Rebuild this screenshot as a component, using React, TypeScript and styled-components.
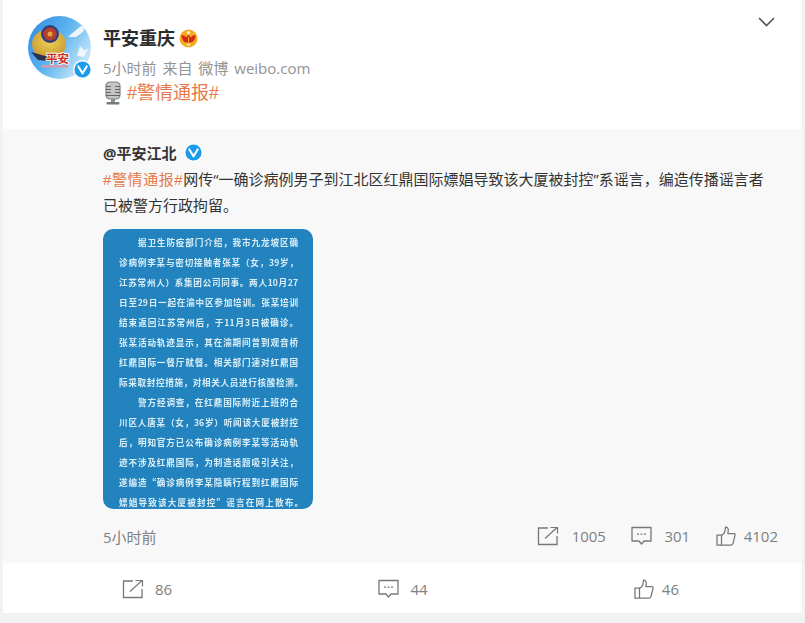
import React from "react";
import styled, { createGlobalStyle } from "styled-components";

const Global = createGlobalStyle`
  html, body { margin: 0; padding: 0; background: #f2f2f2; }
  body { font-family: "Open Sans", "Noto Sans CJK SC", sans-serif; }
  * { box-sizing: border-box; }
`;
const Page = styled.div`
  width: 805px; height: 623px; padding: 0 3px 10px; overflow: hidden;
`;
const Card = styled.main`
  width: 799px; height: 613px; background: #fff; display: flex; flex-direction: column;
`;
const Header = styled.header`
  height: 129px; padding: 16px 28px 0 25px; display: flex; align-items: flex-start;
`;
const AvatarWrap = styled.div`
  position: relative; width: 63px; height: 63px; flex: none; margin-right: 12px;
`;
const Badge = styled.div`
  position: absolute; left: 45px; top: 44px; width: 19px; height: 19px;
`;
const Author = styled.div`
  flex: 1; display: flex; flex-direction: column;
`;
const NameRow = styled.div`
  height: 26px; margin-top: 9px; display: flex; align-items: center; gap: 4px;
`;
const Name = styled.span`
  font-size: 18px; font-weight: 700; color: #2c2c2c; line-height: 26px;
`;
const Meta = styled.div`
  margin-top: 6px; height: 22px; font-size: 15px; line-height: 22px; color: #939393; word-spacing: 2px;
`;
const TopicRow = styled.div`
  margin-top: 0; height: 28px; display: flex; align-items: center; gap: 4px;
`;
const Topic = styled.span<{ $size: number; $track?: number }>`
  color: #e6794a; font-size: ${(p) => p.$size}px; line-height: 1;
  letter-spacing: ${(p) => p.$track ?? 0}px;
  font-family: "Liberation Sans", "Noto Sans CJK SC", sans-serif;
`;
const Chevron = styled.svg`
  flex: none; margin: 1px -1px 0 0;
`;
const Repost = styled.section`
  height: 434px; background: #f8f8f8; padding: 11px 24px 0 100px; display: flex; flex-direction: column;
`;
const OrigName = styled.div`
  height: 24px; margin-bottom: 2px; display: flex; align-items: center; gap: 8px; font-size: 15px; font-weight: 700; color: #333;
`;
const Body = styled.p`
  margin: 0; width: 672px; font-size: 15px; line-height: 26px; color: #333;
`;
const Shot = styled.div`
  margin-top: 11px; width: 210px; height: 280px; border-radius: 10px; overflow: hidden;
  background: #2283bf; padding-top: 3px;
  font-weight: 700; color: #d9eef7; font-size: 8.6px; font-family: "Noto Sans CJK SC", sans-serif;
`;
const ShotLine = styled.div<{ $indent?: boolean; $wide?: boolean }>`
  height: 20px; line-height: 20px; text-align: justify; text-align-last: justify;
  margin-left: ${(p) => (p.$indent ? 35 : 16)}px;
  margin-right: ${(p) => (p.$wide ? 10 : 15)}px;
  filter: blur(0.35px);
`;
const StatsRow = styled.div`
  margin-top: 15px; height: 24px; display: flex; align-items: center; justify-content: space-between;
`;
const Time = styled.span`
  font-size: 15px; color: #808080;
`;
const Stats = styled.div`
  display: flex; align-items: center; gap: 25.5px;
`;
const Stat = styled.div<{ $gap: number }>`
  display: flex; align-items: center; gap: ${(p) => p.$gap}px; font-size: 15px; color: #808080;
`;
const Footer = styled.footer`
  height: 50px; padding: 1px 123px 0 119px; display: flex; align-items: center; justify-content: space-between;
`;
const Action = styled(Stat)``;

const ShareIcon = () => (
  <svg width="22" height="20" viewBox="0 0 22 20" fill="none" stroke="#777" strokeWidth="1.3">
    <path d="M11 2H1.5V18.5H20V10" />
    <path d="M8 12.5L19.5 2M13.5 1.5H20.5V7.5" strokeWidth="1.2" />
  </svg>
);
const CommentIcon = () => (
  <svg width="21" height="20" viewBox="0 0 21 20" fill="none" stroke="#777" strokeWidth="1.3">
    <path d="M1 1.5H20V15H13L10.5 18L8 15H1Z" strokeLinejoin="round" />
    <path d="M6 8.2H8M9.5 8.2H11.5M13 8.2H15" />
  </svg>
);
const LikeIcon = () => (
  <svg width="20" height="20" viewBox="0 0 20 20" fill="none" stroke="#777" strokeWidth="1.25">
    <path d="M1 9H5.5V19H1Z" />
    <path d="M5.5 9.5C8 8 9.5 5 9.5 1.2C11.5 1 12.5 2.5 12.3 4.5L11.8 7.5H18C19 7.5 19.3 8.3 19 9.3L17 17.5C16.8 18.5 16 19 15 19H5.5" strokeLinejoin="round" />
  </svg>
);
const VBadge = ({ size }: { size: number }) => (
  <svg width={size} height={size} viewBox="0 0 20 20">
    <circle cx="10" cy="10" r="9.2" fill="#1e9be8" stroke="#fff" strokeWidth="1.4" />
    <path d="M5.6 6.8L10 14L14.4 6.8" fill="none" stroke="#fff" strokeWidth="2.2" strokeLinecap="round" strokeLinejoin="round" />
  </svg>
);
const Avatar = () => (
  <svg width="63" height="63" viewBox="0 0 63 63">
    <defs>
      <linearGradient id="sky" x1="0" y1="0" x2="1" y2="0.6">
        <stop offset="0" stopColor="#2f86e0" />
        <stop offset="0.55" stopColor="#5db4f0" />
        <stop offset="1" stopColor="#c4e6f8" />
      </linearGradient>
      <radialGradient id="gold" cx="0.5" cy="0.4" r="0.6">
        <stop offset="0" stopColor="#f2d155" />
        <stop offset="1" stopColor="#c79a32" />
      </radialGradient>
      <clipPath id="round"><circle cx="31.5" cy="31.5" r="31.5" /></clipPath>
    </defs>
    <g clipPath="url(#round)">
      <rect width="63" height="63" fill="url(#sky)" />
      <ellipse cx="21" cy="28" rx="17" ry="15" fill="url(#gold)" />
      <circle cx="22" cy="18" r="9" fill="#33407a" />
      <circle cx="22" cy="18" r="6.5" fill="#b8402a" />
      <circle cx="22" cy="18" r="2.5" fill="#e6a23c" />
      <path d="M3 36L24 42L30 46L10 44Z" fill="#28324f" />
      <path d="M40 21L47 15L53 10L57 11L55 16L48 21Z" fill="#eef5fb" />
      <path d="M49 40L52 30L56 34L60 33L56 41Z" fill="#eef5fb" />
      <rect x="14" y="49" width="26" height="2.5" fill="#d49ab0" />
      <text x="18" y="47" fontSize="11.5" fontWeight="700" fill="#cc2a20" stroke="#fff" strokeWidth="1.6" paintOrder="stroke" fontFamily="Noto Sans CJK SC, sans-serif">平安</text>
    </g>
  </svg>
);
const Crown = () => (
  <svg width="19" height="19" viewBox="0 0 19 19">
    <circle cx="9.5" cy="9.5" r="9" fill="#f5a91f" />
    <circle cx="9.5" cy="3.6" r="1.6" fill="#fff3c8" />
    <path d="M2.5 6.5C4 6 6 7 7 8.5L9.5 6L12 8.5C13 7 15 6 16.5 6.5C16.5 10 14.5 12.5 12.5 13.5H6.5C4.5 12.5 2.5 10 2.5 6.5Z" fill="#d3281c" />
    <path d="M9.5 8L9.5 13" stroke="#f5a91f" strokeWidth="1" />
    <path d="M6.5 14.5H12.5L9.5 17.5Z" fill="#fbe28a" />
  </svg>
);
const Mic = () => (
  <svg width="20" height="24" viewBox="0 0 20 24">
    <rect x="3" y="1" width="14" height="17" rx="4" fill="#c2c6c6" stroke="#7d8282" strokeWidth="1.2" />
    <path d="M3 5.5H8M12 5.5H17M3 8.5H8M12 8.5H17M3 11.5H8M12 11.5H17M3 14.5H17" stroke="#666" strokeWidth="1" />
    <rect x="8" y="18" width="4" height="3" fill="#8a8e8e" />
    <rect x="3.5" y="21" width="13" height="2.5" rx="1" fill="#777b7b" />
  </svg>
);

const lines: { t: string; indent?: boolean; wide?: boolean }[] = [
  { t: "据卫生防疫部门介绍，我市九龙坡区确", indent: true },
  { t: "诊病例李某与密切接触者张某（女，39岁，" },
  { t: "江苏常州人）系集团公司同事。两人10月27" },
  { t: "日至29日一起在渝中区参加培训。张某培训" },
  { t: "结束返回江苏常州后，于11月3日被确诊。" },
  { t: "张某活动轨迹显示，其在渝期间曾到观音桥" },
  { t: "红鼎国际一餐厅就餐。相关部门速对红鼎国" },
  { t: "际采取封控措施，对相关人员进行核酸检测。", wide: true },
  { t: "警方经调查，在红鼎国际附近上班的合", indent: true },
  { t: "川区人唐某（女，36岁）听闻该大厦被封控" },
  { t: "后，明知官方已公布确诊病例李某等活动轨" },
  { t: "迹不涉及红鼎国际，为制造话题吸引关注，" },
  { t: "遂编造“确诊病例李某隐瞒行程到红鼎国际" },
  { t: "嫖娼导致该大厦被封控”谣言在网上散布。", wide: true },
];

export default function App() {
  return (
    <Page>
      <Global />
      <Card>
        <Header>
          <AvatarWrap>
            <Avatar />
            <Badge><VBadge size={19} /></Badge>
          </AvatarWrap>
          <Author>
            <NameRow>
              <Name>平安重庆</Name>
              <Crown />
            </NameRow>
            <Meta>5小时前 来自 微博 weibo.com</Meta>
            <TopicRow>
              <Mic />
              <Topic $size={18}>#警情通报#</Topic>
            </TopicRow>
          </Author>
          <Chevron width="17" height="10" viewBox="0 0 17 10" fill="none" stroke="#555" strokeWidth="1.6">
            <path d="M1 1L8.5 8.5L16 1" />
          </Chevron>
        </Header>
        <Repost>
          <OrigName>
            @平安江北
            <VBadge size={19} />
          </OrigName>
          <Body>
            <Topic $size={15} $track={0.6}>#警情通报#</Topic>网传“一确诊病例男子到江北区红鼎国际嫖娼导致该大厦被封控”系谣言，编造传播谣言者已被警方行政拘留。
          </Body>
          <Shot>
            {lines.map((l) => (
              <ShotLine key={l.t} $indent={l.indent} $wide={l.wide}>{l.t}</ShotLine>
            ))}
          </Shot>
          <StatsRow>
            <Time>5小时前</Time>
            <Stats>
              <Stat $gap={13}><ShareIcon />1005</Stat>
              <Stat $gap={12}><CommentIcon />301</Stat>
              <Stat $gap={8}><LikeIcon />4102</Stat>
            </Stats>
          </StatsRow>
        </Repost>
        <Footer>
          <Action $gap={11}><ShareIcon />86</Action>
          <Action $gap={11}><CommentIcon />44</Action>
          <Action $gap={8}><LikeIcon />46</Action>
        </Footer>
      </Card>
    </Page>
  );
}
